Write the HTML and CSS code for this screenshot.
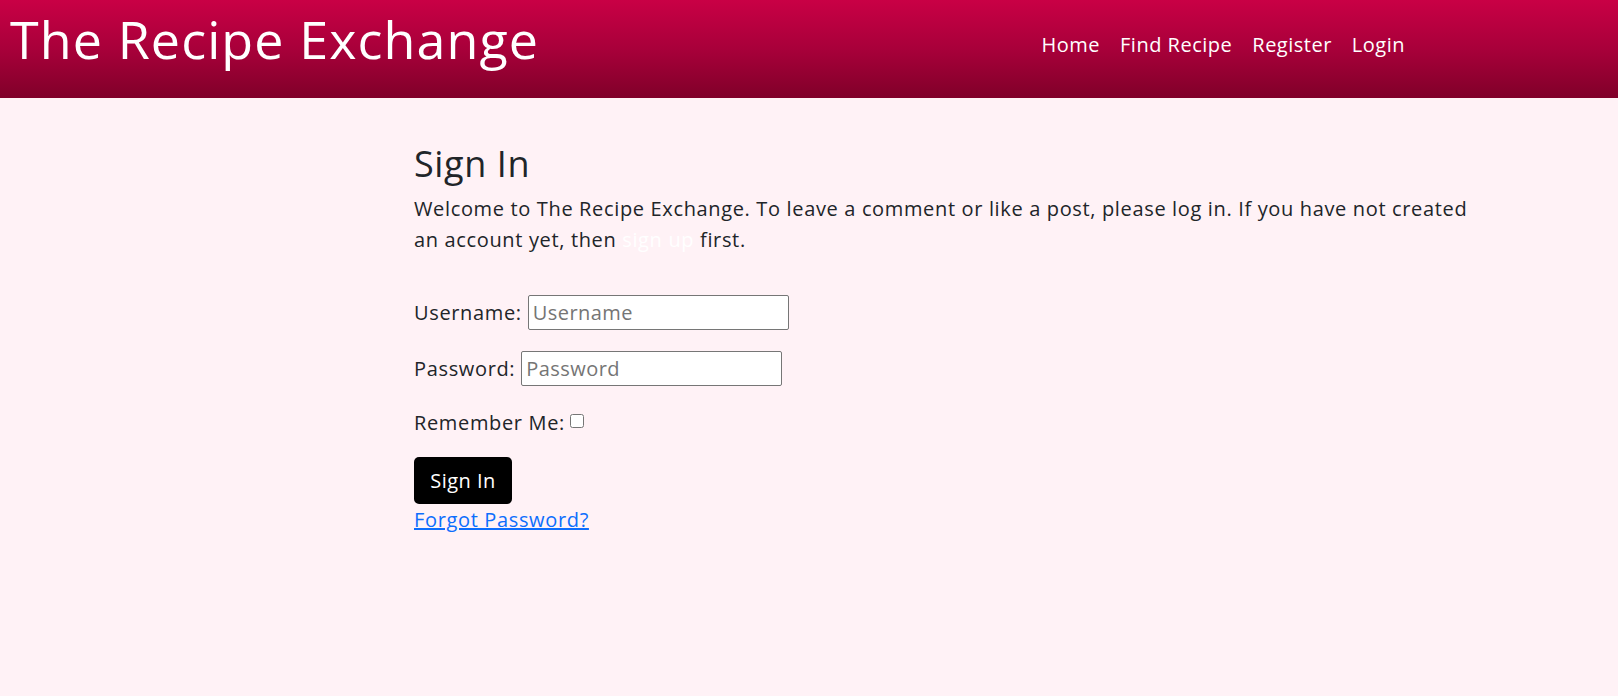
FILE: index.html
```html
<!DOCTYPE html>
<html lang="en">
<head>
<meta charset="utf-8">
<title>The Recipe Exchange - Sign In</title>
<link rel="stylesheet" href="styles.css">
</head>
<body>
<header class="site-header">
  <a class="brand" href="#">The Recipe Exchange</a>
  <nav class="main-nav">
    <a class="nav-link" href="#">Home</a>
    <a class="nav-link" href="#">Find Recipe</a>
    <a class="nav-link" href="#">Register</a>
    <a class="nav-link" href="#">Login</a>
  </nav>
</header>
<main class="content">
  <h2 class="page-title">Sign In</h2>
  <p class="intro">Welcome to The Recipe Exchange. To leave a comment or like a post, please log in. If you have not created an account yet, then <a class="signup-link" href="#">sign up</a> first.</p>
  <form class="login-form">
    <p class="form-row"><label for="u">Username:</label><input class="text-input" id="u" type="text" placeholder="Username"></p>
    <p class="form-row"><label for="p">Password:</label><input class="text-input" id="p" type="password" placeholder="Password"></p>
    <p class="form-row remember"><label for="r">Remember Me:</label><input class="check" id="r" type="checkbox"></p>
    <button class="btn-signin" type="submit">Sign In</button>
  </form>
  <a class="forgot" href="#">Forgot Password?</a>
</main>
</body>
</html>
```
FILE: styles.css
```css
* { box-sizing: border-box; }
html, body { margin: 0; padding: 0; }
body {
  background: #fff2f6;
  color: #212529;
  font-family: "Open Sans", "Liberation Sans", sans-serif;
  font-size: 20px;
  letter-spacing: 0.65px;
  line-height: 1.55;
}
.site-header {
  height: 98px;
  background: linear-gradient(to bottom, #c90045 0%, #a8003a 50%, #800029 100%);
  display: flex;
  align-items: flex-start;
}
.brand {
  color: #fff;
  text-decoration: none;
  font-size: 52px;
  line-height: 1;
  margin: 13px 0 0 10px;
  letter-spacing: 1.1px;
}
.main-nav {
  display: flex;
  gap: 20px;
  margin: 32px 213px 0 auto;
}
.nav-link {
  color: #fff;
  text-decoration: none;
  font-size: 20px;
  letter-spacing: 0.5px;
  line-height: 26px;
}
.content {
  padding: 44px 128px 0 414px;
}
.page-title {
  font-weight: 400;
  font-size: 36px;
  letter-spacing: 0.6px;
  line-height: 43px;
  margin: 0 0 8px;
}
.intro {
  margin: 0 0 40px;
  line-height: 31px;
}
.signup-link { color: #fff; text-decoration: none; }
.login-form { margin: 0; }
.form-row {
  margin: 0 0 21px;
  display: flex;
  align-items: center;
  gap: 6px;
  line-height: 31px;
}
.text-input {
  width: 261px;
  height: 35px;
  border: 1px solid #767676;
  border-radius: 2px;
  background: #fff;
  font-family: inherit;
  font-size: 20px;
  letter-spacing: 0.45px;
  padding: 0 4px;
  color: #212529;
}
.text-input::placeholder { color: #757575; }
.remember { margin-bottom: 19px; gap: 5px; }
.check {
  width: 14px;
  height: 14px;
  margin: 0 0 4px 0;
}
.btn-signin {
  display: block;
  background: #000;
  color: #fff;
  border: 0;
  border-radius: 5px;
  width: 98px;
  height: 47px;
  font-family: inherit;
  font-size: 20px;
  letter-spacing: 0.45px;
  padding: 0;
}
.forgot {
  color: #0d6efd;
  font-size: 20px;
  line-height: 28px;
  display: inline-block;
}
```
